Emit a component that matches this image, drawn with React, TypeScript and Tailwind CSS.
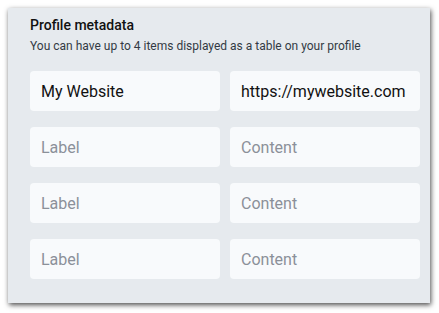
import React from "react";

const rows = [
  { label: "My Website", content: "https://mywebsite.com" },
  { label: "", content: "" },
  { label: "", content: "" },
  { label: "", content: "" },
];

function Field({ value, placeholder }: { value: string; placeholder: string }) {
  return (
    <input
      defaultValue={value}
      placeholder={placeholder}
      className="h-10 w-full rounded bg-[#f8fafc] px-[11px] text-base text-[#111] outline-none placeholder:text-[#8b9099]"
    />
  );
}

export default function App() {
  return (
    <div className="min-h-screen bg-white p-2 font-['Roboto',sans-serif]">
      <div className="w-[422px] bg-[#e6eaee] pt-[7px] pb-6 pl-[22px] pr-[10px] shadow-[1px_2px_5px_rgba(0,0,0,0.7)]">
        <h2 className="text-sm font-medium leading-5 text-[#111]">Profile metadata</h2>
        <p className="mt-[3px] text-xs leading-4 text-[#333a44]">
          You can have up to 4 items displayed as a table on your profile
        </p>
        <div className="mt-[17px] grid grid-cols-2 gap-x-[10px] gap-y-4">
          {rows.map((r, i) => (
            <React.Fragment key={i}>
              <Field value={r.label} placeholder="Label" />
              <Field value={r.content} placeholder="Content" />
            </React.Fragment>
          ))}
        </div>
      </div>
    </div>
  );
}
